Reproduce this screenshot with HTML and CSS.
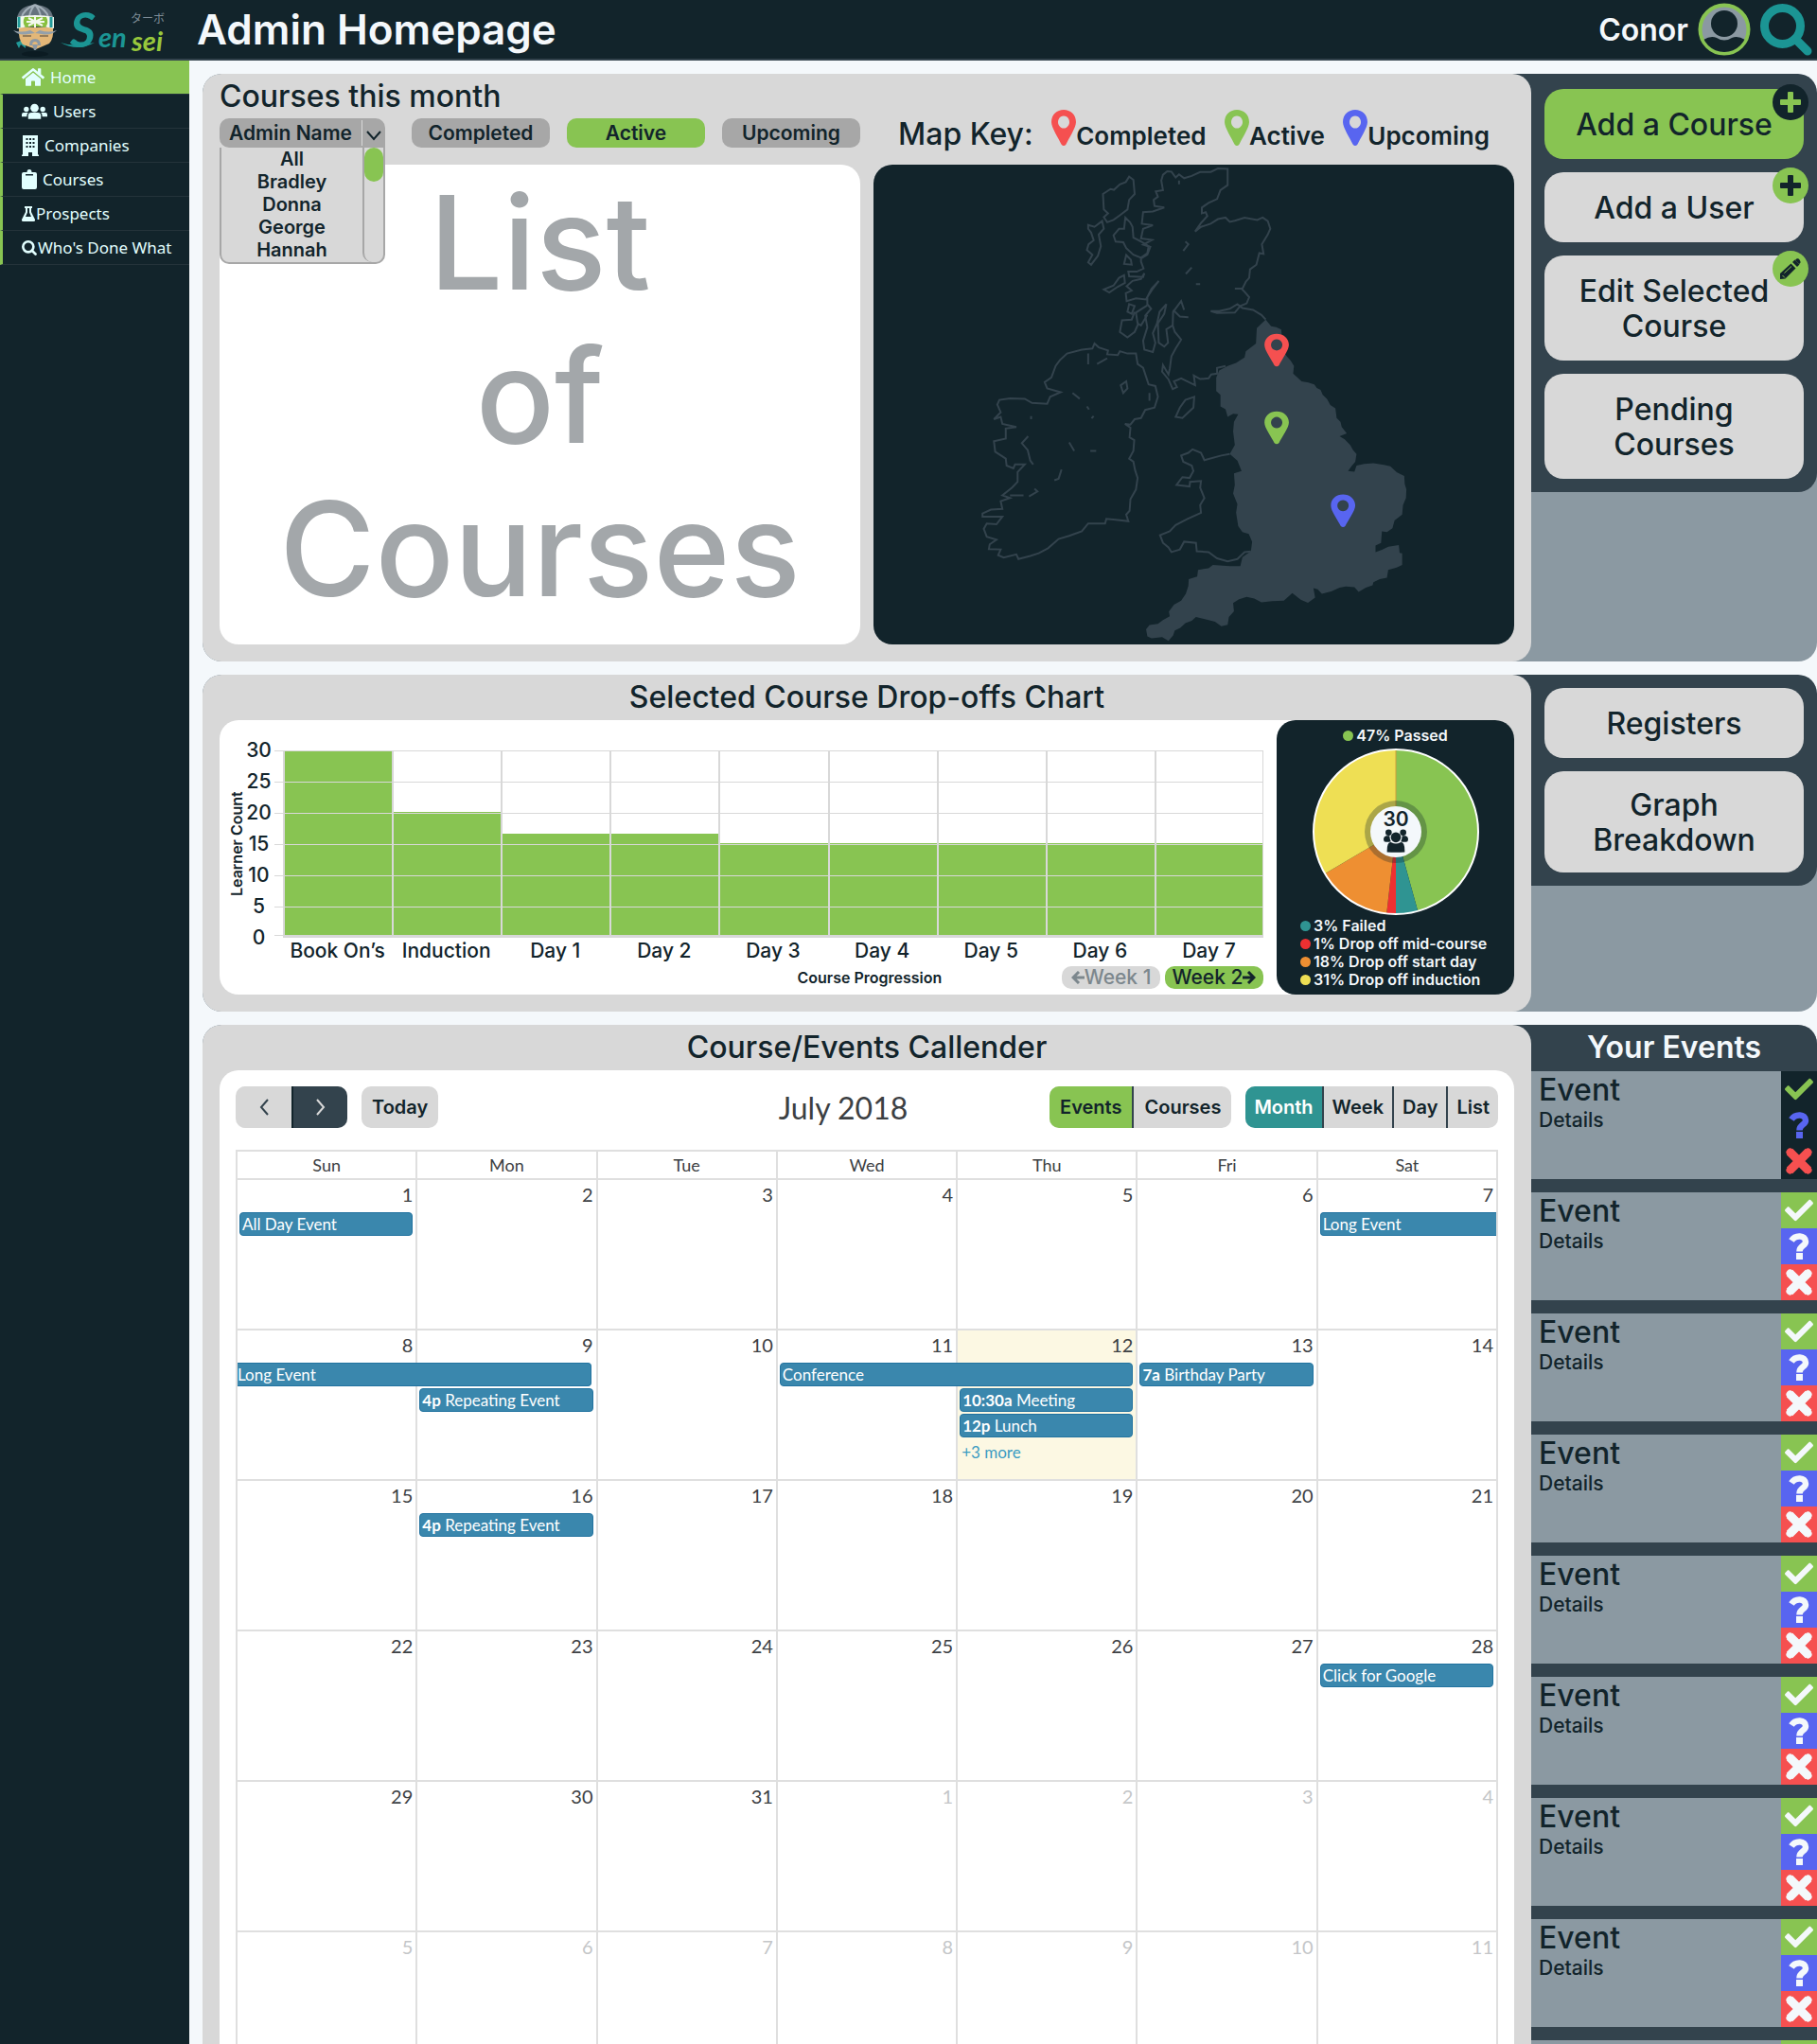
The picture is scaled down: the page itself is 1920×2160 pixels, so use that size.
FILE: index.html
```html
<!DOCTYPE html>
<html lang="en">
<head>
<meta charset="utf-8">
<title>Admin Homepage</title>
<link rel="stylesheet" href="styles.css">
</head>
<body>
<svg class="sprite" aria-hidden="true">
  <symbol id="check" viewBox="0 0 512 512"><path d="M173.898 439.404l-166.4-166.4c-9.997-9.997-9.997-26.206 0-36.204l36.203-36.204c9.997-9.998 26.207-9.998 36.204 0L192 312.69 432.095 72.596c9.997-9.997 26.207-9.997 36.204 0l36.203 36.204c9.997 9.997 9.997 26.206 0 36.204l-294.4 294.401c-9.998 9.997-26.207 9.997-36.204-.001z"/></symbol>
  <symbol id="cross" viewBox="0 0 28 28"><path d="M4 4L24 24M24 4L4 24" fill="none" stroke="currentColor" stroke-width="9"/><path d="M4.500 4.500L23.500 23.500M23.500 4.500L4.500 23.500" fill="none" stroke="currentColor" stroke-width="8" stroke-linecap="round"/></symbol>
  <symbol id="question" viewBox="0 0 28 28"><path d="M6 8C10 1.500 21 2 21 9C21 14 14.500 13 14.500 19.500" fill="none" stroke="currentColor" stroke-width="6.500"/><path d="M11 21h7v7h-7z"/></symbol>
  <symbol id="plus" viewBox="0 0 22 22"><rect x="0" y="8" width="22" height="6" rx="1"/><rect x="8" y="0" width="6" height="22" rx="1"/></symbol>
  <symbol id="pencil" viewBox="0 0 22 22"><path d="M0 22V16L11.500 5.500 16.500 10.500 5.500 21.500z"/><path d="M13 4L15.500 1.500 20.500 6.500 18 9z"/><path d="M16 2C17.500-.500 19.500 0 20.500 1.500S22.500 4.500 20 6z"/><path d="M4.500 15.500L12 8.500M2.500 18l2.500 2.500" stroke="#88c452" stroke-width="1" fill="none"/></symbol>
  <symbol id="home" viewBox="0 32 576 448"><path d="M280.37 148.26L96 300.11V464a16 16 0 0 0 16 16l112.06-.29a16 16 0 0 0 15.92-16V368a16 16 0 0 1 16-16h64a16 16 0 0 1 16 16v95.64a16 16 0 0 0 16 16.05L464 480a16 16 0 0 0 16-16V300L295.67 148.26a12.19 12.19 0 0 0-15.3 0zM571.6 251.47L488 182.56V44.05a12 12 0 0 0-12-12h-56a12 12 0 0 0-12 12v72.61L318.47 43a48 48 0 0 0-61 0L4.34 251.47a12 12 0 0 0-1.6 16.9l25.5 31A12 12 0 0 0 45.15 301l235.22-193.74a12.19 12.19 0 0 1 15.3 0L530.9 301a12 12 0 0 0 16.9-1.6l25.5-31a12 12 0 0 0-1.7-16.93z"/></symbol>
  <symbol id="users" viewBox="0 0 28 17"><circle cx="14" cy="5" r="4.500"/><circle cx="5" cy="6.500" r="2.800"/><circle cx="23" cy="6.500" r="2.800"/><path d="M7 17v-3.500q0-3.500 3.500-3.500h7q3.500 0 3.500 3.500V17z"/><path d="M0 14.500V12q0-2 2-2h5q-1.500 1.500-1.500 4.500zM28 14.500V12q0-2-2-2h-5q1.500 1.500 1.500 4.500z"/></symbol>
  <symbol id="building" viewBox="0 0 18 22"><path fill-rule="evenodd" d="M1 0h16v20.500h1V22h-7v-4H7v4H0v-1.500h1zM4.500 3v2h2V3zm3.500 0v2h2V3zm3.500 0v2h2V3zM4.500 7v2h2V7zM8 7v2h2V7zm3.500 0v2h2V7zm-7 4v2h2v-2zM8 11v2h2v-2zm3.500 0v2h2v-2z"/></symbol>
  <symbol id="clipboard" viewBox="0 0 16 21"><path fill-rule="evenodd" d="M2 3h3.500q0-3 2.500-3t2.500 3H14q2 0 2 2v14q0 2-2 2H2q-2 0-2-2V5q0-2 2-2zM4 5v1.500h8V5zM8 1.500v1.500"/></symbol>
  <symbol id="flask" viewBox="0 0 14 16"><path fill-rule="evenodd" d="M3 0h8v2h-1v4l4 8q.500 2-1.500 2h-11Q-.500 16 0 14l4-8V2H3zm3 2v4.500L4 11h6L8 6.500V2z"/></symbol>
  <symbol id="search" viewBox="0 0 55 55"><circle cx="23.500" cy="23.500" r="19" fill="none" stroke="currentColor" stroke-width="9"/><path d="M37 37L50 50" stroke="currentColor" stroke-width="9" stroke-linecap="round"/></symbol>
  <symbol id="pin" viewBox="0 0 26 38"><path fill-rule="evenodd" d="M13 0C20 0 26 5 26 13C26 19 18 31 15.500 36.500Q13 39.500 10.500 36.500C8 31 0 19 0 13C0 5 6 0 13 0zM13 6.500a6 6.500 0 1 0 .01 0z"/></symbol>
  <symbol id="group" viewBox="0 0 78 74"><circle cx="16" cy="11" r="10"/><circle cx="62" cy="11" r="10"/><circle cx="39" cy="26" r="16"/><path d="M11 73q-1-34 14-31q14 8 28 0q15-3 14 31q-28 2-56 0zM2 39q-6-14 6-18h11q1 14 5 18q-12 4-22 0zM76 39q6-14-6-18H59q-1 14-5 18q12 4 22 0z"/></symbol>
</svg>

<header class="topbar">
  <a class="logo" href="#" aria-label="Turbo Sensei">
    <svg width="200" height="62" viewBox="0 0 200 62">
      <ellipse cx="37" cy="57" rx="14" ry="3" fill="#0b1b22"/>
      <path d="M17 45L27 41 27 51 22 47 20 51z" fill="#219a99"/>
      <path d="M20 29h36q1 12-4 17L38 52 24 47q-5-6-4-18z" fill="#e3b778"/>
      <path d="M18 19Q20 6 37 5Q55 6 56 19z" fill="#66737e"/>
      <path d="M23 18q2-8 14-13M51 18q-2-8-14-13M31 18q1-8 6-13M43 18q-1-8-6-13" fill="none" stroke="#a3afb9" stroke-width="2"/>
      <path d="M18 18q19-4 39 0v12q-19-4-39 0z" fill="#f3f8ee"/>
      <path d="M20 18v11M54 18v11" stroke="#219a99" stroke-width="3"/>
      <path d="M26 18h23q3 6-1 11-10-2-21 0-4-5-1-11z" fill="#88c03f"/>
      <path d="M37 16v13M30 19l15 8M45 19l-15 8M28 23h19" stroke="#f3f8ee" stroke-width="2"/>
      <circle cx="37" cy="23" r="2" fill="#f3f8ee"/>
      <path d="M14 32q8 3 18 0l5 3 5-3q10 3 18 0-6 6-16 4l-7-1-7 1q-10 2-16-4z" fill="#93a0ab"/>
      <path d="M24 38h9M42 38h9" stroke="#4d4238" stroke-width="1"/>
      <path d="M31 48q0-7 6-7t6 7h-3q0-4-3-4t-3 4zM34 47h6l-2 6h-2z" fill="#8d99a3"/>
      <path d="M64 45q14 5 36 0-18 10-36 0z" fill="#1b9594"/>
      <text class="brush brush-cap" x="74" y="50">S</text>
      <text class="brush" x="104" y="50">en</text>
      <text class="brush brush-lime" x="139" y="54">sei</text>
      <text class="kana" x="138" y="24">ターボ</text>
    </svg>
  </a>
  <h1>Admin Homepage</h1>
  <a class="user" href="#">Conor
    <svg width="56" height="56" viewBox="0 0 56 56"><defs><clipPath id="face"><circle cx="28" cy="28" r="24"/></clipPath></defs><circle cx="28" cy="28" r="25.500" fill="#8b99a2" stroke="#88c452" stroke-width="4"/><g clip-path="url(#face)" fill="#12242b"><circle cx="28" cy="22" r="14"/><path d="M6 39Q14 34 20 37Q28 42 36 37Q42 34 50 39V56H6z"/></g></svg>
  </a>
  <button class="search" type="button" aria-label="Search"><svg width="55" height="55"><use href="#search"/></svg></button>
</header>

<div class="shell">
<nav class="sidebar">
  <a class="nav-item current" href="#"><svg width="24" height="19"><use href="#home"/></svg>Home</a>
  <a class="nav-item" href="#"><svg width="27" height="17"><use href="#users"/></svg>Users</a>
  <a class="nav-item" href="#"><svg width="18" height="22"><use href="#building"/></svg>Companies</a>
  <a class="nav-item" href="#"><svg width="16" height="21"><use href="#clipboard"/></svg>Courses</a>
  <a class="nav-item tight" href="#"><svg width="14" height="16"><use href="#flask"/></svg>Prospects</a>
  <a class="nav-item tight" href="#"><svg width="16" height="16"><use href="#search"/></svg>Who's Done What</a>
</nav>

<main class="content">
  <section class="block">
    <div class="panel overview">
      <div class="courses-head">
        <h2>Courses this month</h2>
        <div class="filters">
          <div class="picker">
            <button class="picker-button" type="button" aria-expanded="true"><span>Admin Name</span>
              <svg width="24" height="31" viewBox="0 0 24 31"><path d="M5 14l7 8 7-8" fill="none" stroke="#12242b" stroke-width="2"/></svg></button>
            <div class="picker-list">
              <select size="5" aria-label="Admin Name"><option>All</option><option>Bradley</option><option>Donna</option><option>George</option><option>Hannah</option></select>
              <div class="picker-track"><div class="picker-thumb"></div></div>
            </div>
          </div>
          <button class="filter" type="button">Completed</button>
          <button class="filter on" type="button">Active</button>
          <button class="filter" type="button">Upcoming</button>
        </div>
      </div>
      <div class="map-key">
        <span class="map-key-title">Map Key:</span>
        <span class="key"><svg class="red" width="26" height="38"><use href="#pin"/></svg>Completed</span>
        <span class="key"><svg class="green" width="26" height="38"><use href="#pin"/></svg>Active</span>
        <span class="key"><svg class="blue" width="26" height="38"><use href="#pin"/></svg>Upcoming</span>
      </div>
      <div class="course-list">List<br>of<br>Courses</div>
      <svg class="map" viewBox="7 279 1516 1242" preserveAspectRatio="none" role="img" aria-label="Map of course locations">
        <path class="land" d="M935 680L948 697 960 700 972 706 975 760 985 775 994 786 1002 800 1000 820 1020 840 1036 843 1050 848 1056 857 1065 862 1070 875 1080 885 1088 901 1100 910 1103 935 1112 945 1115 958 1127 975 1110 982 1122 990 1135 1005 1142 1018 1150 1028 1147 1048 1138 1060 1130 1072 1145 1074 1150 1058 1168 1054 1190 1052 1215 1056 1230 1060 1245 1075 1263 1085 1264 1105 1268 1120 1267 1142 1260 1160 1258 1185 1240 1200 1235 1220 1222 1230 1210 1228 1208 1258 1195 1265 1195 1282 1210 1276 1225 1268 1250 1264 1252 1284 1258 1285 1258 1315 1245 1322 1225 1328 1222 1348 1205 1352 1190 1360 1188 1368 1172 1374 1155 1385 1145 1373 1125 1371 1110 1374 1090 1384 1068 1390 1058 1378 1048 1375 1052 1400 1035 1413 1018 1405 998 1388 978 1408 950 1409 925 1412 908 1402 890 1398 872 1404 858 1414 860 1435 848 1450 845 1470 830 1474 815 1462 800 1458 770 1450 760 1460 745 1466 733 1478 720 1485 716 1498 705 1512 690 1502 665 1505 655 1500 652 1482 660 1471 680 1468 692 1458 708 1448 706 1436 718 1418 735 1408 746 1390 752 1370 753 1352 773 1345 775 1328 800 1324 810 1315 850 1318 875 1318 880 1295 900 1280 903 1255 895 1235 880 1230 870 1215 865 1180 868 1158 858 1130 862 1108 860 1078 878 1072 868 1045 850 1028 862 1005 858 970 860 945 870 925 858 924 845 932 840 912 828 905 828 875 818 865 818 830 825 812 845 800 865 792 885 778 888 762 912 742 914 702z"/>
        <g class="coast">
          <path d="M935 680L925 668 905 655 880 650 868 640 850 652 825 658 805 658 820 663 862 662 875 645 890 638 896 622 888 612 878 600 862 600 880 600 888 582 896 572 898 550 913 538 920 508 930 510 926 485 940 460 946 445 940 425 928 416 915 422 885 416 862 424 850 427 840 416 822 420 805 432 782 440 768 452 782 430 797 412 793 402 784 405 784 390 800 378 820 368 828 345 845 332 845 290 822 289 805 298 780 298 760 308 742 314 730 304 722 312 712 297 702 296 692 305 688 320 692 345 675 348 680 362 670 370 672 386 695 390 668 400 645 402 642 432 668 436 645 445 640 470 666 474 645 486 662 492 655 512 640 522 640 530 646 548 630 556 610 556 612 568 645 570 648 560 640 575 620 580 606 594 618 605 604 612 606 632 628 625 652 628 665 600 682 580 668 600 655 622 655 640 664 652 650 670 655 700 645 735 648 758 668 764 674 740 668 715 678 690 684 660 700 640 695 665 680 690 682 740 695 750 704 740 700 705 715 695 716 660 735 632 742 655 M716 655L732 672 752 674 M714 692L720 712 735 732 722 755 712 775 708 808 705 822 692 798 690 815 705 835 715 860 725 855 718 840 735 832 768 850 765 825 780 834 800 832 806 822 820 820 820 805 840 800"/>
          <path d="M612 310L604 324 590 330 576 344 568 342 550 355 552 395 562 405 552 415 560 428 575 422 590 410 608 395 612 370 625 355 622 318z"/>
          <path d="M515 435L530 440 548 425 552 445 540 460 545 490 538 515 522 538 515 532 525 512 512 500 516 485 528 475 522 455 515 445z"/>
          <path d="M603 416L614 428 620 440 622 468 640 478 658 490 655 508 640 520 622 512 605 495 598 480 580 478 575 462 588 445 600 445z"/>
          <path d="M605 513L616 525 618 538 600 536z M600 565L602 585 585 595 565 610 552 602 575 592 588 572z"/>
          <path d="M612 640L625 645 618 665 608 660z M655 643L628 662 632 690 640 695 655 668 M625 660L618 680 595 682 590 712 608 726 625 712 634 690"/>
          <path d="M745 478L752 485 740 502M760 545L746 562M770 588h10M730 320v10"/>
          <path d="M766 880L764 908 752 920 738 935 722 932 732 908 745 888z"/>
          <path d="M850 1028L830 1032 790 1044 782 1025 762 1016 752 1025 735 1032 740 1048 760 1058 764 1072 755 1090 738 1088 724 1108 755 1112 756 1100 782 1098 780 1115 790 1142 780 1160 782 1180 750 1196 722 1212 708 1228 685 1238 692 1258 705 1270 712 1282 732 1275 742 1255 770 1258 772 1280 800 1282 820 1298 845 1306 868 1300 885 1282 900 1280"/>
          <path d="M530 742L540 752 562 760 560 770 585 772 590 762 608 768 628 768 632 795 645 805 652 828 658 848 674 852 680 880 672 908 650 914 640 935 625 938 615 952 602 950 615 960 613 985 624 992 622 1020 612 1040 622 1048 626 1070 632 1090 628 1120 615 1145 613 1175 605 1185 610 1202 580 1198 558 1196 555 1208 515 1208 500 1228 470 1240 445 1248 420 1272 398 1285 378 1292 350 1300 345 1288 315 1296 302 1290 308 1275 280 1274 282 1262 298 1250 275 1242 268 1222 275 1208 298 1210 312 1190 265 1190 265 1182 285 1172 312 1170 308 1150 330 1142 312 1135 335 1115 348 1100 348 1075 365 1055 342 1055 338 1065 322 1058 320 1040 295 1022 292 995 320 988 320 962 345 958 312 950 308 932 292 938 308 920 300 900 305 888 330 884 365 885 382 896 418 898 425 880 450 868 418 858 412 842 428 830 438 800 448 785 465 768 500 758 525 755z"/>
          <path d="M515 768v28M536 795L560 780M592 850L605 840 608 858 598 870zM660 870v20M478 870L495 885M512 905l5 8M528 930l-5 6M380 930v8M373 982L358 1000 372 1018 378 1045 385 1055M470 998L482 1020M520 1020h14M452 1068L445 1092 435 1096M388 1118L395 1125 375 1138M330 1135h32"/>
        </g>
        <use class="red" href="#pin" x="932" y="712" width="58" height="94"/>
        <use class="green" href="#pin" x="932" y="913" width="58" height="94"/>
        <use class="blue" href="#pin" x="1089" y="1128" width="58" height="94"/>
      </svg>
    </div>
    <div class="side">
      <div class="actions">
        <button class="action on" type="button">Add a Course<span class="badge dark"><svg width="22" height="22"><use href="#plus"/></svg></span></button>
        <button class="action" type="button">Add a User<span class="badge"><svg width="22" height="22"><use href="#plus"/></svg></span></button>
        <button class="action" type="button">Edit Selected Course<span class="badge"><svg width="22" height="22"><use href="#pencil"/></svg></span></button>
        <button class="action" type="button">Pending<br>Courses</button>
      </div>
    </div>
  </section>

  <section class="block">
    <div class="panel">
      <h2 class="panel-title">Selected Course Drop-offs Chart</h2>
      <div class="dropoffs">
        <div class="chart">
          <div class="y-title">Learner Count</div>
          <div class="y-axis"><span>30</span><span>25</span><span>20</span><span>15</span><span>10</span><span>5</span><span>0</span></div>
          <div class="plot">
            <div class="col"><div class="bar" style="height:100%"></div></div>
            <div class="col"><div class="bar" style="height:66.7%"></div></div>
            <div class="col"><div class="bar" style="height:55%"></div></div>
            <div class="col"><div class="bar" style="height:55%"></div></div>
            <div class="col"><div class="bar" style="height:50%"></div></div>
            <div class="col"><div class="bar" style="height:50%"></div></div>
            <div class="col"><div class="bar" style="height:50%"></div></div>
            <div class="col"><div class="bar" style="height:50%"></div></div>
            <div class="col"><div class="bar" style="height:50%"></div></div>
          </div>
          <div class="x-axis"><span>Book On’s</span><span>Induction</span><span>Day 1</span><span>Day 2</span><span>Day 3</span><span>Day 4</span><span>Day 5</span><span>Day 6</span><span>Day 7</span></div>
          <div class="chart-foot">
            <span class="x-title">Course Progression</span>
            <div class="weeks">
              <button class="week" type="button" disabled><svg width="14" height="14" viewBox="0 0 14 14"><path d="M8 1L2 7l6 6M2 7h12" fill="none" stroke="currentColor" stroke-width="3"/></svg>Week 1</button>
              <button class="week on" type="button">Week 2<svg width="14" height="14" viewBox="0 0 14 14"><path d="M6 1l6 6-6 6M12 7H0" fill="none" stroke="currentColor" stroke-width="3"/></svg></button>
            </div>
          </div>
        </div>
        <div class="pie-card">
          <div class="legend-item"><i class="dot dot-green"></i>47% Passed</div>
          <svg class="pie" width="176" height="176" viewBox="-88 -88 176 176">
            <path d="M0 0V-87A87 87 0 0 1 23.200 83.800z" fill="#88c452"/>
            <path d="M0 0L23.200 83.800A87 87 0 0 1 0 87z" fill="#2f9492"/>
            <path d="M0 0V87A87 87 0 0 1-9.800 86.400z" fill="#ee3031"/>
            <path d="M0 0L-9.800 86.400A87 87 0 0 1-75 44.200z" fill="#ee8f32"/>
            <path d="M0 0L-75 44.200A87 87 0 0 1 0-87z" fill="#eedf54"/>
            <path d="M0-87V0" stroke="#cf9c3b" stroke-width="1"/>
            <circle r="87" fill="none" stroke="#fff" stroke-width="2"/>
            <circle r="33" fill="#12242b" fill-opacity=".3"/>
            <circle r="27" fill="#f4f8fb"/>
            <text class="pie-total" x="0" y="-6" text-anchor="middle">30</text>
            <use href="#group" x="-13" y="-3" width="26" height="25" fill="#12242b"/>
          </svg>
          <div class="legend">
            <div class="legend-item"><i class="dot dot-teal"></i>3% Failed</div>
            <div class="legend-item"><i class="dot dot-red"></i>1% Drop off mid-course</div>
            <div class="legend-item"><i class="dot dot-orange"></i>18% Drop off start day</div>
            <div class="legend-item"><i class="dot dot-yellow"></i>31% Drop off induction</div>
          </div>
        </div>
      </div>
    </div>
    <div class="side">
      <div class="actions second">
        <button class="action" type="button">Registers</button>
        <button class="action compact" type="button">Graph<br>Breakdown</button>
      </div>
    </div>
  </section>

  <section class="block">
    <div class="panel">
      <h2 class="panel-title">Course/Events Callender</h2>
      <div class="calendar">
        <div class="toolbar">
          <div class="tool-side">
            <div class="group">
              <button class="step" type="button" aria-label="Previous"><svg width="12" height="20" viewBox="0 0 12 20"><path d="M10 2L3 10l7 8" fill="none" stroke="currentColor" stroke-width="2"/></svg></button>
              <button class="step next" type="button" aria-label="Next"><svg width="12" height="20" viewBox="0 0 12 20"><path d="M2 2l7 8-7 8" fill="none" stroke="currentColor" stroke-width="2"/></svg></button>
            </div>
            <div class="group"><button class="today" type="button">Today</button></div>
          </div>
          <h3>July 2018</h3>
          <div class="tool-side right">
            <div class="group kinds"><button class="on" type="button">Events</button><button type="button">Courses</button></div>
            <div class="group views"><button class="teal" type="button">Month</button><button type="button">Week</button><button type="button">Day</button><button type="button">List</button></div>
          </div>
        </div>
        <table>
          <thead><tr><th>Sun</th><th>Mon</th><th>Tue</th><th>Wed</th><th>Thu</th><th>Fri</th><th>Sat</th></tr></thead>
          <tbody>
            <tr>
              <td><time>1</time><a class="event" href="#">All Day Event</a></td>
              <td><time>2</time></td><td><time>3</time></td><td><time>4</time></td><td><time>5</time></td><td><time>6</time></td>
              <td><time>7</time><a class="event to-next" href="#">Long Event</a></td>
            </tr>
            <tr>
              <td><time>8</time><a class="event two from-prev" href="#">Long Event</a></td>
              <td><time>9</time><a class="event below" href="#"><b>4p</b> Repeating Event</a></td>
              <td><time>10</time></td>
              <td><time>11</time><a class="event two" href="#">Conference</a></td>
              <td class="current-day"><time>12</time><a class="event below" href="#"><b>10:30a</b> Meeting</a><a class="event" href="#"><b>12p</b> Lunch</a><a class="more" href="#">+3 more</a></td>
              <td><time>13</time><a class="event" href="#"><b>7a</b> Birthday Party</a></td>
              <td><time>14</time></td>
            </tr>
            <tr>
              <td><time>15</time></td><td><time>16</time><a class="event" href="#"><b>4p</b> Repeating Event</a></td><td><time>17</time></td><td><time>18</time></td><td><time>19</time></td><td><time>20</time></td><td><time>21</time></td>
            </tr>
            <tr>
              <td><time>22</time></td><td><time>23</time></td><td><time>24</time></td><td><time>25</time></td><td><time>26</time></td><td><time>27</time></td><td><time>28</time><a class="event" href="#">Click for Google</a></td>
            </tr>
            <tr>
              <td><time>29</time></td><td><time>30</time></td><td><time>31</time></td><td class="other"><time>1</time></td><td class="other"><time>2</time></td><td class="other"><time>3</time></td><td class="other"><time>4</time></td>
            </tr>
            <tr>
              <td class="other"><time>5</time></td><td class="other"><time>6</time></td><td class="other"><time>7</time></td><td class="other"><time>8</time></td><td class="other"><time>9</time></td><td class="other"><time>10</time></td><td class="other"><time>11</time></td>
            </tr>
          </tbody>
        </table>
      </div>
    </div>
    <div class="side feed">
      <h2>Your Events</h2>
      <article class="card picked"><div class="card-text"><h3>Event</h3><p>Details</p></div><div class="replies"><button class="yes" type="button" aria-label="Accept"><svg width="30" height="30"><use href="#check"/></svg></button><button class="maybe" type="button" aria-label="Maybe"><svg width="28" height="28"><use href="#question"/></svg></button><button class="no" type="button" aria-label="Decline"><svg width="28" height="28"><use href="#cross"/></svg></button></div></article>
      <article class="card"><div class="card-text"><h3>Event</h3><p>Details</p></div><div class="replies"><button class="yes" type="button" aria-label="Accept"><svg width="30" height="30"><use href="#check"/></svg></button><button class="maybe" type="button" aria-label="Maybe"><svg width="28" height="28"><use href="#question"/></svg></button><button class="no" type="button" aria-label="Decline"><svg width="28" height="28"><use href="#cross"/></svg></button></div></article>
      <article class="card"><div class="card-text"><h3>Event</h3><p>Details</p></div><div class="replies"><button class="yes" type="button" aria-label="Accept"><svg width="30" height="30"><use href="#check"/></svg></button><button class="maybe" type="button" aria-label="Maybe"><svg width="28" height="28"><use href="#question"/></svg></button><button class="no" type="button" aria-label="Decline"><svg width="28" height="28"><use href="#cross"/></svg></button></div></article>
      <article class="card"><div class="card-text"><h3>Event</h3><p>Details</p></div><div class="replies"><button class="yes" type="button" aria-label="Accept"><svg width="30" height="30"><use href="#check"/></svg></button><button class="maybe" type="button" aria-label="Maybe"><svg width="28" height="28"><use href="#question"/></svg></button><button class="no" type="button" aria-label="Decline"><svg width="28" height="28"><use href="#cross"/></svg></button></div></article>
      <article class="card"><div class="card-text"><h3>Event</h3><p>Details</p></div><div class="replies"><button class="yes" type="button" aria-label="Accept"><svg width="30" height="30"><use href="#check"/></svg></button><button class="maybe" type="button" aria-label="Maybe"><svg width="28" height="28"><use href="#question"/></svg></button><button class="no" type="button" aria-label="Decline"><svg width="28" height="28"><use href="#cross"/></svg></button></div></article>
      <article class="card"><div class="card-text"><h3>Event</h3><p>Details</p></div><div class="replies"><button class="yes" type="button" aria-label="Accept"><svg width="30" height="30"><use href="#check"/></svg></button><button class="maybe" type="button" aria-label="Maybe"><svg width="28" height="28"><use href="#question"/></svg></button><button class="no" type="button" aria-label="Decline"><svg width="28" height="28"><use href="#cross"/></svg></button></div></article>
      <article class="card"><div class="card-text"><h3>Event</h3><p>Details</p></div><div class="replies"><button class="yes" type="button" aria-label="Accept"><svg width="30" height="30"><use href="#check"/></svg></button><button class="maybe" type="button" aria-label="Maybe"><svg width="28" height="28"><use href="#question"/></svg></button><button class="no" type="button" aria-label="Decline"><svg width="28" height="28"><use href="#cross"/></svg></button></div></article>
      <article class="card"><div class="card-text"><h3>Event</h3><p>Details</p></div><div class="replies"><button class="yes" type="button" aria-label="Accept"><svg width="30" height="30"><use href="#check"/></svg></button><button class="maybe" type="button" aria-label="Maybe"><svg width="28" height="28"><use href="#question"/></svg></button><button class="no" type="button" aria-label="Decline"><svg width="28" height="28"><use href="#cross"/></svg></button></div></article>
      <article class="card"><div class="card-text"></div><div class="replies"><button class="yes" type="button" aria-label="Accept"></button></div></article>
    </div>
  </section>
</main>
</div>
</body>
</html>
```
FILE: styles.css
```css
* { box-sizing: border-box; }

:root {
  --ink: #12242b;
  --slate: #33434d;
  --steel: #8b99a2;
  --panel: #d8d8d8;
  --grey: #a7a7a7;
  --green: #88c452;
  --teal: #2f9492;
  --red: #f55050;
  --blue: #5865f0;
  --paper: #f4f8fb;
}

body {
  margin: 0;
  height: 100vh;
  display: flex;
  flex-direction: column;
  overflow: hidden;
  background: var(--paper);
  color: var(--ink);
  font-family: Inter, "Liberation Sans", sans-serif;
  font-weight: 500;
}

h1, h2, h3, p { margin: 0; font-weight: 500; }
a { color: inherit; text-decoration: none; }
button { border: 0; padding: 0; background: none; color: inherit; font: inherit; cursor: pointer; }
svg { display: block; fill: currentColor; flex: none; }
.sprite { position: absolute; width: 0; height: 0; }
.red { color: var(--red); }
.green { color: var(--green); }
.blue { color: var(--blue); }

.topbar {
  flex: none;
  height: 64px;
  display: flex;
  align-items: center;
  padding-right: 5px;
  background: var(--ink);
  border-bottom: 2px solid var(--slate);
  color: var(--paper);
}
.logo { width: 208px; }
.topbar h1 { font-size: 44px; line-height: 48px; font-weight: 600; }
.user { margin-left: auto; display: flex; align-items: center; gap: 10px; font-size: 32px; font-weight: 600; }
.search { margin-left: 10px; color: #1b9594; }
.brush { font: italic 700 29px Lato, sans-serif; fill: #1b9594; }
.brush-cap { font-size: 52px; }
.brush-lime { fill: #98c83c; }
.kana { font: 12px "Noto Sans CJK JP", sans-serif; fill: #7d8b95; }

.shell { flex: 1; min-height: 0; display: flex; }
.sidebar { flex: none; width: 200px; background: var(--ink); }
.nav-item {
  height: 36px;
  display: flex;
  align-items: center;
  gap: 6px;
  padding-left: 20px;
  border-left: 3px solid var(--green);
  border-bottom: 1px solid #24333a;
  color: #e2ffff;
  font: 17px "Noto Sans", sans-serif;
}
.nav-item.current { background: var(--green); }
.nav-item.tight { gap: 1px; }

.content {
  flex: 1;
  min-width: 0;
  overflow-y: auto;
  scrollbar-width: none;
  padding: 14px 0 14px 14px;
  display: flex;
  flex-direction: column;
  gap: 14px;
}
.block {
  flex: none;
  display: grid;
  grid-template-columns: 1fr 302px;
  background: var(--steel);
  border-radius: 20px;
  overflow: hidden;
}
.panel { position: relative; z-index: 1; min-width: 0; padding: 0 18px 18px; background: var(--panel); border-radius: 20px; }
.side { margin-left: -20px; }
h2 { font-size: 32px; line-height: 48px; }
.panel-title { text-align: center; }

/* Courses and map */
.overview { display: grid; grid-template-columns: 1fr 1fr; column-gap: 14px; }
.courses-head { padding-bottom: 18px; }
.courses-head h2 { line-height: 47px; }
.filters { display: flex; gap: 18px; }
.picker { position: relative; flex: none; width: 175px; margin-right: 10px; }
.picker-button { width: 100%; display: flex; align-items: center; background: var(--grey); border-radius: 10px 10px 0 10px; font-size: 21px; font-weight: 600; line-height: 31px; }
.picker-button span { flex: 1; border-right: 1px solid var(--panel); line-height: 27px; }
.picker-list { position: absolute; z-index: 2; top: 31px; left: 0; right: 0; display: flex; background: var(--panel); border: 2px solid var(--grey); border-top: 0; border-radius: 0 0 10px 10px; }
.picker-list select { flex: 1; min-width: 0; height: 121px; border: 0; outline: 0; padding: 0; overflow: hidden; appearance: none; background: none; color: inherit; font: inherit; font-size: 20px; text-align: center; scrollbar-width: none; }
.picker-list option { height: 24px; min-height: 24px; padding: 0; font-size: 20px; font-weight: 600; line-height: 24px; text-align: center; }
.picker-track { width: 22px; border: 2px solid var(--grey); border-width: 0 0 0 2px; border-radius: 0 0 10px 10px; }
.picker-thumb { height: 36px; border-radius: 10px; background: var(--green); }
.filter { flex: 1; border-radius: 10px; background: var(--grey); font-size: 21px; font-weight: 600; line-height: 31px; }
.on { background: var(--green); }
.map-key { display: flex; align-items: flex-end; justify-content: space-between; padding: 0 26px 16px 26px; }
.map-key-title { font-size: 32px; line-height: 32px; }
.key { display: flex; align-items: flex-end; padding-bottom: 4px; font-size: 26px; font-weight: 600; line-height: 20px; }
.course-list { display: grid; place-content: center; padding-bottom: 20px; border-radius: 20px; background: #fff; color: #a3a7aa; text-align: center; font-size: 138px; line-height: 162px; }
.map { width: 100%; aspect-ratio: 677 / 507; background: var(--ink); border-radius: 20px; }
.land { fill: var(--slate); }
.coast path { fill: none; stroke: var(--slate); stroke-width: 2px; vector-effect: non-scaling-stroke; }

.actions { display: flex; flex-direction: column; gap: 14px; padding: 16px 14px 14px 34px; background: var(--slate); border-radius: 0 20px 20px 0; }
.actions.second { padding-top: 14px; }
.action { position: relative; padding: 19px 12px 18px; border-radius: 20px; background: var(--panel); font-size: 32px; line-height: 37px; }
.action.compact { padding: 17px 12px 16px; }
.action.on { background: var(--green); }
.badge { position: absolute; top: -5px; right: -5px; width: 38px; height: 38px; display: grid; place-content: center; border-radius: 50%; background: var(--green); }
.badge.dark { background: var(--ink); color: var(--green); }

/* Drop-offs */
.dropoffs { display: flex; background: #fff; border-radius: 20px; }
.chart {
  flex: 1;
  min-width: 0;
  display: grid;
  grid-template-columns: 20px 39px 1fr;
  grid-template-rows: 198px 30px 24px;
  padding: 32px 14px 6px 8px;
}
.y-title { writing-mode: vertical-rl; transform: rotate(180deg); text-align: center; font-size: 16px; font-weight: 600; line-height: 20px; }
.y-axis { display: flex; flex-direction: column; justify-content: space-between; margin: -12px 0; padding-right: 12px; text-align: center; font-size: 21px; line-height: 24px; }
.plot { position: relative; display: grid; grid-template-columns: repeat(9, 1fr); border-bottom: 2px solid var(--panel); }
.plot::after { content: ""; position: absolute; inset: 0 0 0 -9px; background: repeating-linear-gradient(var(--panel) 0 1px, transparent 1px 33px); border-bottom: 1px solid var(--panel); }
.col { display: flex; align-items: flex-end; border-left: 2px solid var(--panel); }
.col:last-child { border-right: 1px solid var(--panel); }
.bar { flex: 1; background: var(--green); }
.x-axis { grid-column: 3; display: grid; grid-template-columns: repeat(9, 1fr); text-align: center; font-size: 21px; line-height: 28px; white-space: nowrap; }
.chart-foot { grid-column: 3; display: grid; grid-template-columns: 8fr auto 5fr; align-items: center; }
.x-title { grid-column: 2; font-size: 16px; font-weight: 600; }
.weeks { justify-self: end; display: flex; gap: 5px; }
.week { width: 104px; display: flex; align-items: center; justify-content: center; border-radius: 10px; font-size: 21px; line-height: 24px; }
.week:disabled { background: var(--panel); color: #7c878d; }
.pie-card { flex: none; width: 251px; display: flex; flex-direction: column; align-items: center; padding: 7px 0 6px; background: var(--ink); color: var(--paper); border-radius: 20px; }
.legend-item { display: flex; align-items: center; gap: 3px; font-size: 16px; font-weight: 600; line-height: 19px; }
.pie { margin: 4px 0 2px; }
.pie-total { font-size: 21px; font-weight: 600; fill: var(--ink); }
.legend { align-self: stretch; padding-left: 25px; }
.dot { width: 11px; height: 11px; border-radius: 50%; }
.dot-green { background: var(--green); }
.dot-teal { background: var(--teal); }
.dot-red { background: #ee3031; }
.dot-orange { background: #ee8f32; }
.dot-yellow { background: #eedf54; }

/* Calendar */
.calendar { padding: 17px 17px 18px; background: #fff; border-radius: 20px; }
.toolbar { display: grid; grid-template-columns: 1fr auto 1fr; align-items: center; margin-bottom: 23px; }
.toolbar h3 { padding-right: 50px; font: 32px Lato, sans-serif; color: #3c4043; }
.tool-side { display: flex; gap: 15px; }
.right { justify-content: flex-end; }
.group { display: flex; overflow: hidden; border-radius: 10px; background: var(--panel); }
.group button { height: 44px; padding: 0 9px; font-size: 20px; font-weight: 600; }
.group button.today, .group.kinds button { padding: 0 11px; }
.group button + button { border-left: 2px solid var(--slate); }
.group button.step { width: 59px; display: grid; place-content: center; color: var(--slate); }
.group button.next { background: var(--slate); color: var(--panel); border-left-color: var(--ink); }
.group button.teal { background: var(--teal); color: #fff; }
table { width: 100%; table-layout: fixed; border-collapse: collapse; font-family: Lato, sans-serif; color: #3c4043; }
th, td { padding: 0; border: 2px solid #dfdfdf; }
th { height: 30px; font-size: 18px; font-weight: 400; }
td { height: 159px; vertical-align: top; }
time { display: block; padding: 2px 3px 0 0; height: 34px; text-align: right; font-size: 20px; line-height: 26px; font-weight: 400; }
.event { position: relative; z-index: 1; display: block; height: 25px; margin: 0 3px 2px 2px; padding-left: 2px; border: 1px solid #2273a0; border-radius: 4px; background: #3a87ad; color: #fff; font-size: 17px; font-weight: 400; line-height: 24px; white-space: nowrap; }
.event b { font-weight: 700; }
.event.below { margin-top: 27px; }
.event.two { width: calc(200% - 3px); }
.event.from-prev { margin-left: 0; padding-left: 0; border-left: 0; border-radius: 0 4px 4px 0; }
.event.to-next { margin-right: 0; border-right: 0; border-radius: 4px 0 0 4px; }
.more { display: block; padding-left: 4px; color: #3a9cc2; font-size: 17px; font-weight: 400; line-height: 28px; }
.current-day { background: #fcf8e3; }
.other { color: #c4c6c8; }

/* Event feed */
.feed { background: var(--slate); display: flex; flex-direction: column; gap: 14px; padding-left: 20px; }
.feed h2 { margin-bottom: -13px; text-align: center; color: var(--paper); line-height: 48px; font-weight: 600; }
.card { display: flex; height: 114px; background: var(--steel); }
.card-text { flex: 1; padding: 2px 8px; }
.card h3 { font-size: 32px; line-height: 36px; }
.card p { font-size: 21px; line-height: 28px; }
.replies button { width: 38px; height: 38px; display: grid; place-content: center; color: var(--paper); }
.yes { background: var(--green); }
.maybe { background: var(--blue); }
.no { background: var(--red); }
.picked .replies { background: var(--ink); }
.picked .replies button { background: none; }
.picked .replies .yes { color: var(--green); }
.picked .replies .maybe { color: var(--blue); }
.picked .replies .no { color: var(--red); }
```
